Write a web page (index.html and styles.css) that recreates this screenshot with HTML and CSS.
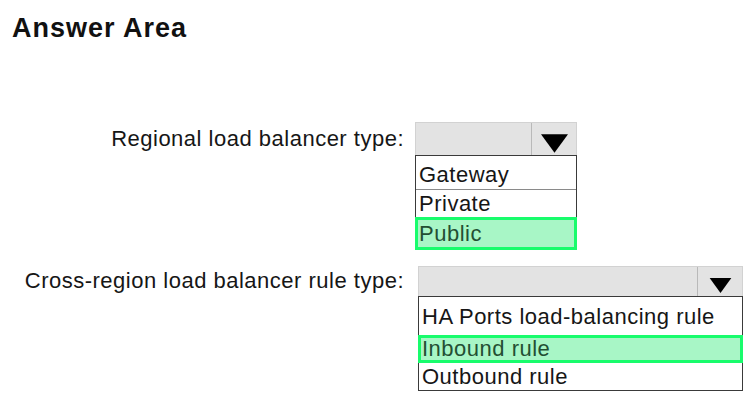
FILE: index.html
```html
<!DOCTYPE html>
<html lang="en">
<head>
    <meta charset="UTF-8">
    <meta name="viewport" content="width=device-width, initial-scale=1.0">
    <title>Answer Area</title>
    <link rel="stylesheet" href="styles.css">
</head>
<body>
    <h1 class="title">Answer Area</h1>

    <div class="answers">
        <div class="row row-regional">
            <span class="label">Regional load balancer type:</span>
            <div class="dropdown">
                <div class="dropdown-head">
                    <span class="dropdown-value"></span>
                    <span class="dropdown-arrow">
                        <svg viewBox="0 0 26 18"><polygon points="0,0 26,0 13,18" fill="#000"/></svg>
                    </span>
                </div>
                <ul class="dropdown-list">
                    <li class="option">Gateway</li>
                    <li class="option">Private</li>
                    <li class="option selected">Public</li>
                </ul>
            </div>
        </div>

        <div class="row row-cross">
            <span class="label">Cross-region load balancer rule type:</span>
            <div class="dropdown">
                <div class="dropdown-head">
                    <span class="dropdown-value"></span>
                    <span class="dropdown-arrow">
                        <svg viewBox="0 0 26 18"><polygon points="0,0 26,0 13,18" fill="#000"/></svg>
                    </span>
                </div>
                <ul class="dropdown-list">
                    <li class="option">HA Ports load-balancing rule</li>
                    <li class="option selected">Inbound rule</li>
                    <li class="option">Outbound rule</li>
                </ul>
            </div>
        </div>
    </div>
</body>
</html>
```

FILE: styles.css
```css
body {
    margin: 0;
    padding: 0;
    background: #fff;
    color: #161616;
    font-family: "Liberation Sans", Arial, sans-serif;
}
.title {
    margin: 0;
    padding: 13px 0 0 12px;
    font-size: 27px;
    line-height: 31px;
    letter-spacing: 1px;
    font-weight: bold;
    color: #111;
}
.answers {
    margin-top: 78px;
}
.row {
    display: flex;
    align-items: flex-start;
}
.label {
    width: 404px;
    text-align: right;
    font-size: 22px;
    letter-spacing: 0.5px;
    line-height: 33px;
}

/* dropdown */
.dropdown-head {
    display: flex;
    box-sizing: border-box;
    height: 33px;
    background: #e3e3e3;
    border: 1px solid #d2d2d2;
    border-bottom: none;
}
.dropdown-value {
    flex: 1;
}
.dropdown-arrow {
    width: 44px;
    border-left: 1px solid #b9b9b9;
    display: flex;
    justify-content: center;
    align-items: flex-end;
    padding-bottom: 2px;
}
.dropdown-arrow svg {
    width: 27px;
    height: 19px;
    display: block;
}
.dropdown-list {
    list-style: none;
    margin: 0;
    padding: 0;
    border: 1px solid #3a3a3a;
}
.option {
    font-size: 22px;
    letter-spacing: 0.5px;
    line-height: 27px;
    padding: 0 3px;
}
.option.selected {
    background: #a8f6c6;
    border: 3px solid #18fc6c;
    color: #234f33;
    margin: 0 -1px -1px;
    padding-left: 1px;
}

/* first question */
.row-regional .dropdown {
    margin-left: 11px;
    width: 162px;
}
.row-regional .option:first-child {
    padding-top: 5px;
    padding-bottom: 1px;
    border-bottom: 1px solid #8a8a8a;
}

/* second question */
.row-cross {
    margin-top: 16px;
}
.row-cross .label {
    line-height: 30px;
}
.row-cross .dropdown {
    margin-left: 14px;
    width: 325px;
}
.row-cross .dropdown-head {
    height: 30px;
}
.row-cross .dropdown-arrow {
    padding-bottom: 3px;
}
.row-cross .dropdown-arrow svg {
    width: 25px;
    height: 15px;
}
.row-cross .option:first-child {
    padding-top: 6px;
    padding-bottom: 4px;
}
.row-cross .option.selected {
    line-height: 22px;
    margin-top: 1px;
    margin-bottom: 0;
}
```
